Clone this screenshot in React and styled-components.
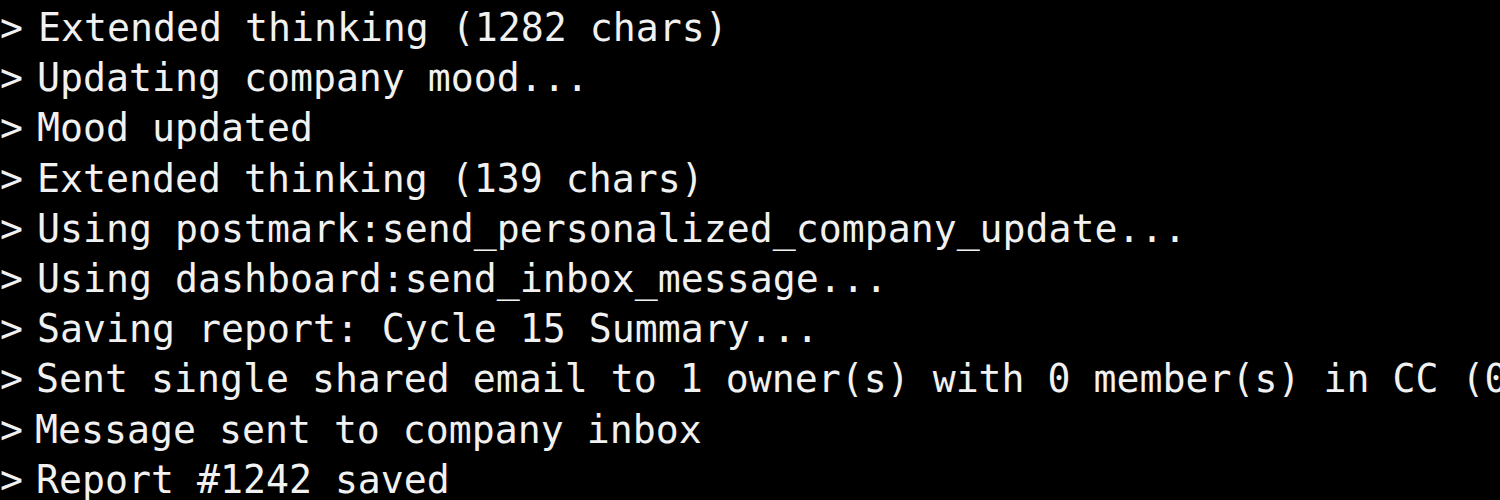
import React from "react";
import styled, { createGlobalStyle } from "styled-components";

const Global = createGlobalStyle`
  html, body {
    margin: 0;
    padding: 0;
    background: #000;
    overflow: hidden;
  }
  #root {
    width: 1500px;
    height: 500px;
    overflow: hidden;
  }
`;

const Terminal = styled.div`
  width: 1500px;
  height: 500px;
  background: #000;
  color: #f1f1f1;
  font-family: "DejaVu Sans Mono", "Liberation Mono", monospace;
  font-size: 38.2px;
  line-height: 50.2px;
  padding-top: 3px;
  box-sizing: border-box;
  display: flex;
  flex-direction: column;
  overflow: hidden;
`;

const Line = styled.div`
  display: flex;
  white-space: pre;
  padding-left: ${(p) => p.$shift ?? 0}px;
`;

const Prompt = styled.span`
  flex: 0 0 auto;
  width: 37px;
`;

const Text = styled.span`
  flex: 0 0 auto;
  margin-left: ${(p) => p.$nudge ?? 0}px;
`;

const lines = [
  { t: "Extended thinking (1282 chars)", n: 1 },
  { t: "Updating company mood...", n: 0 },
  { t: "Mood updated", n: 0 },
  { t: "Extended thinking (139 chars)", n: 0 },
  { t: "Using postmark:send_personalized_company_update...", n: 0 },
  { t: "Using dashboard:send_inbox_message...", n: 0 },
  { t: "Saving report: Cycle 15 Summary...", n: 0 },
  { t: "Sent single shared email to 1 owner(s) with 0 member(s) in CC (0 failed)", n: -1 },
  { t: "Message sent to company inbox", n: -2 },
  { t: "Report #1242 saved", n: -1 },
];

export default function App() {
  return (
    <>
      <Global />
      <Terminal>
        {lines.map((l, i) => (
          <Line key={i}>
            <Prompt>&gt;</Prompt>
            <Text $nudge={l.n}>{l.t}</Text>
          </Line>
        ))}
      </Terminal>
    </>
  );
}
